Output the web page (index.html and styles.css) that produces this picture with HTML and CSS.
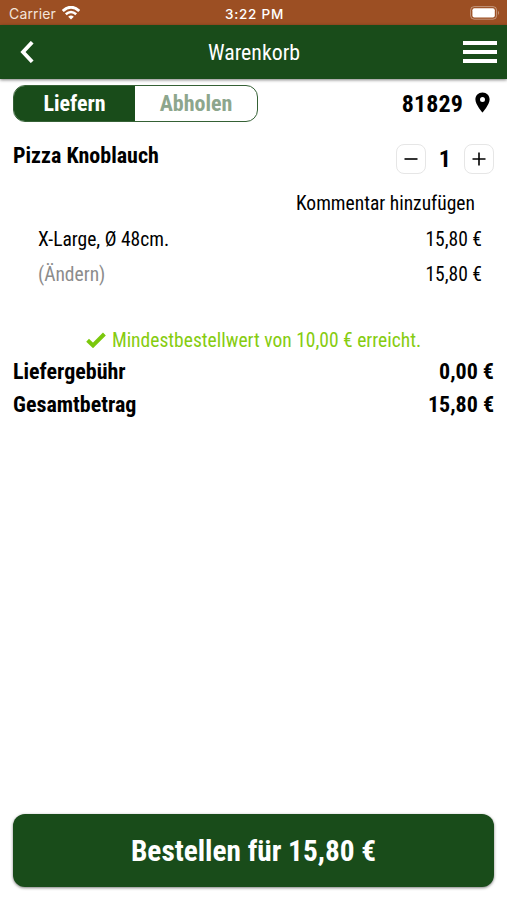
FILE: index.html
```html
<!DOCTYPE html>
<html lang="de">
<head>
  <meta charset="UTF-8" />
  <meta name="viewport" content="width=device-width, initial-scale=1.0"/>
  <title>Warenkorb</title>
  <link rel="stylesheet" href="styles.css">
</head>
<body>

  <div class="status-bar">
    <div class="carrier">
      <span>Carrier</span>
      <svg class="wifi" viewBox="0 0 18 14">
        <path d="M0.8 5 Q9 -2.6 17.2 5" fill="none" stroke="#fff" stroke-width="2.8"/>
        <path d="M3.8 8.3 Q9 3.6 14.2 8.3" fill="none" stroke="#fff" stroke-width="2.5"/>
        <path d="M6.2 10.7 Q9 8.2 11.8 10.7 L9 13.6 Z" fill="#fff"/>
      </svg>
    </div>
    <span class="time">3:22 PM</span>
    <svg class="battery" viewBox="0 0 30 14">
      <rect x="0.6" y="0.6" width="26" height="12.6" rx="3.6" fill="none" stroke="#fff" stroke-opacity="0.4"/>
      <rect x="2.4" y="2.2" width="22.4" height="9.4" rx="2" fill="#fff"/>
      <path d="M28 4.8 Q30 6.9 28 9 Z" fill="#fff" fill-opacity="0.4"/>
    </svg>
  </div>

  <header class="nav-bar">
    <svg class="back" viewBox="0 0 14 22">
      <path d="M12.2 1.2 L3 11 L12.2 20.8" fill="none" stroke="#fff" stroke-width="3.8"/>
    </svg>
    <h1>Warenkorb</h1>
    <div class="menu"><i></i><i></i><i></i></div>
  </header>

  <main class="cart">
    <div class="delivery">
      <div class="switch">
        <div class="option active"><span>Liefern</span></div>
        <div class="option"><span>Abholen</span></div>
      </div>
      <div class="zip">
        <span>81829</span>
        <svg viewBox="0 0 15 21">
          <path fill-rule="evenodd" d="M7.5 0.5 C3.3 0.5 0.4 3.5 0.4 7.4 C0.4 12.4 7.5 20.5 7.5 20.5 S14.6 12.4 14.6 7.4 C14.6 3.5 11.7 0.5 7.5 0.5 Z M7.5 5 A2.5 2.5 0 1 1 7.5 10 A2.5 2.5 0 1 1 7.5 5 Z"/>
        </svg>
      </div>
    </div>

    <div class="item-head">
      <h2>Pizza Knoblauch</h2>
      <div class="stepper">
        <button class="step" aria-label="weniger">
          <svg viewBox="0 0 14 14"><path d="M0.5 7 H13.5"/></svg>
        </button>
        <span class="count">1</span>
        <button class="step" aria-label="mehr">
          <svg viewBox="0 0 14 14"><path d="M0.5 7 H13.5 M7 0.5 V13.5"/></svg>
        </button>
      </div>
    </div>

    <div class="comment"><span>Kommentar hinzufügen</span></div>

    <div class="line"><span>X-Large, Ø 48cm.</span><span>15,80 €</span></div>
    <div class="line"><span class="change">(Ändern)</span><span>15,80 €</span></div>

    <div class="minimum">
      <svg viewBox="0 0 20 16">
        <path d="M1.6 8.2 L7 13.4 L18.4 2" fill="none" stroke="#7bc80c" stroke-width="4"/>
      </svg>
      <span>Mindestbestellwert von 10,00 € erreicht.</span>
    </div>

    <div class="total"><span>Liefergebühr</span><span>0,00 €</span></div>
    <div class="total"><span>Gesamtbetrag</span><span>15,80 €</span></div>
  </main>

  <button class="order"><span>Bestellen für 15,80 €</span></button>

</body>
</html>
```
FILE: styles.css
```css
* {
  margin: 0;
  padding: 0;
  box-sizing: border-box;
}

body {
  display: flex;
  flex-direction: column;
  height: 900px;
  font-family: 'Roboto Condensed', Roboto, sans-serif;
  font-stretch: 75%;
  font-size: 19.55px;
  color: #000;
  background: #fff;
  overflow: hidden;
}

span, h1, h2 {
  white-space: nowrap;
}

.status-bar {
  display: grid;
  grid-template-columns: 1fr auto 1fr;
  align-items: center;
  height: 25px;
  padding: 2px 7px 0 9px;
  background: #9c4f23;
  color: #fff;
  font-family: Inter, sans-serif;
  font-stretch: normal;
  font-size: 14px;
}

.carrier {
  display: flex;
  align-items: center;
  gap: 6px;
  letter-spacing: 0.15px;
  color: #f3e4da;
}

.wifi {
  width: 18px;
  height: 14px;
  margin-bottom: 1px;
}

.time {
  font-size: 13.5px;
  font-weight: 500;
  letter-spacing: 0.75px;
}

.battery {
  width: 30px;
  height: 14px;
  margin-bottom: 1px;
  justify-self: end;
}

.nav-bar {
  display: grid;
  grid-template-columns: 34px 1fr 34px;
  align-items: center;
  height: 54px;
  padding: 0 10px 0 20px;
  background: #194c1a;
  color: #fff;
  box-shadow: 0 1px 3px rgba(0, 0, 0, 0.5);
}

.back {
  width: 14px;
  height: 22px;
}

.nav-bar h1 {
  padding-right: 9px;
  font-size: 21.8px;
  font-weight: 400;
  text-align: center;
}

.menu {
  display: flex;
  flex-direction: column;
  gap: 5px;
}

.menu i {
  height: 4px;
  background: #fff;
}

.cart {
  flex: 1;
  padding: 6px 13px 0;
}

.delivery {
  display: flex;
  justify-content: space-between;
  align-items: center;
  height: 37px;
}

.switch {
  display: flex;
  width: 245px;
  height: 37px;
  border: 1px solid #356135;
  border-radius: 12px;
  background: #fff;
  overflow: hidden;
}

.option {
  flex: 1;
  display: flex;
  align-items: center;
  justify-content: center;
  font-size: 22px;
  font-weight: 700;
  color: #8da68d;
}

.option.active {
  flex: 0 0 121px;
  background: #194c1a;
  color: #fff;
}

.zip {
  display: flex;
  align-items: center;
  gap: 12px;
  padding-right: 4px;
  font-size: 24px;
  font-weight: 700;
}

.zip span {
  letter-spacing: 0.1px;
}

.zip svg {
  width: 15px;
  height: 21px;
  margin-bottom: 2px;
}

.item-head {
  display: flex;
  justify-content: space-between;
  height: 66px;
  padding-top: 21px;
}

.item-head h2 {
  font-size: 22px;
  font-weight: 700;
  line-height: 26px;
}

.stepper {
  display: flex;
  gap: 13px;
  height: 31px;
  align-items: center;
}

.step {
  display: flex;
  align-items: center;
  justify-content: center;
  width: 30px;
  height: 30px;
  border: 1px solid #e6e6e6;
  border-radius: 8px;
  background: #fff;
}

.step svg {
  width: 14px;
  height: 14px;
  fill: none;
  stroke: #000;
  stroke-width: 1.6;
}

.count {
  font-size: 24px;
  font-weight: 700;
}

.comment {
  height: 35px;
  padding-right: 19px;
  line-height: 31px;
  text-align: right;
}

.line {
  display: flex;
  justify-content: space-between;
  height: 35px;
  padding: 0 12px 0 25px;
  line-height: 33px;
}

.change {
  color: #8c8c8c;
}

.minimum {
  display: flex;
  align-items: center;
  justify-content: center;
  gap: 6px;
  height: 30px;
  margin-top: 32px;
  color: #86cc10;
}

.minimum svg {
  width: 20px;
  height: 16px;
}

.total {
  display: flex;
  justify-content: space-between;
  font-size: 22px;
  font-weight: 700;
  line-height: 33px;
}

.order {
  height: 73px;
  margin: 0 13px 13px;
  border: none;
  border-radius: 12px;
  background: #194c1a;
  box-shadow: 0 1px 3px rgba(0, 0, 0, 0.5);
  color: #fff;
  font-family: inherit;
  font-stretch: inherit;
  font-size: 29.3px;
  font-weight: 700;
}
```
